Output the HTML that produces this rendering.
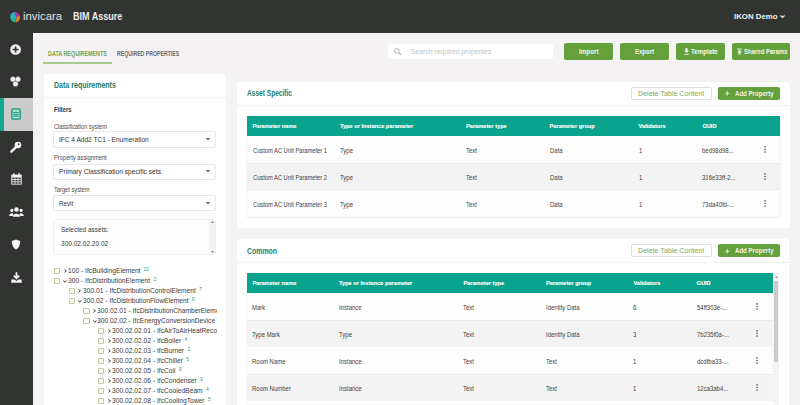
<!DOCTYPE html>
<html><head><meta charset="utf-8"><style>
*{box-sizing:border-box;margin:0;padding:0}
html,body{width:800px;height:405px;overflow:hidden}
body{position:relative;background:#f4f2f2;font-family:"Liberation Sans",sans-serif;color:#3a3a3a}
.a{position:absolute}
.t{position:absolute;white-space:nowrap;line-height:1}
svg{position:absolute;overflow:visible}
</style></head><body>
<div class="a" style="left:0px;top:0px;width:800px;height:33px;background:#323431"></div>
<svg style="left:9.5px;top:11.5px" width="10" height="10.6" viewBox="0 0 10 10.6">
<defs><linearGradient id="lg" x1="0" y1="0" x2="0.4" y2="1"><stop offset="0" stop-color="#3b9ce0"/><stop offset="0.45" stop-color="#1cb9c4"/><stop offset="1" stop-color="#22b36e"/></linearGradient>
<clipPath id="cp"><ellipse cx="5" cy="5.3" rx="4.8" ry="5.2" transform="rotate(-18 5 5.3)"/></clipPath></defs>
<g clip-path="url(#cp)">
<rect x="0" y="0" width="10" height="10.6" fill="url(#lg)"/>
<path d="M4.2 -0.5 L11 -0.5 L11 4.2 C9.5 3.6 7.8 4.2 6.6 5.4 C5.4 4 4.5 2.2 4.2 -0.5Z" fill="#b0359e"/>
<path d="M11 4.2 L11 11 L6.2 11 C5.9 9.2 5.9 7 6.6 5.4 C7.8 4.2 9.5 3.6 11 4.2Z" fill="#f07b25"/>
<path d="M6.6 5.4 C5.9 7 5.9 9.2 6.2 11" stroke="#333" stroke-width="0.45" fill="none" opacity="0.6"/>
</g></svg>
<span class="t" style="left:23.40px;top:11.67px;font-size:10.2px;color:#e2e2e2;transform:scaleX(1.1108);transform-origin:0 0;">invicara</span>
<span class="t" style="left:73.10px;top:11.88px;font-size:10.3px;color:#ececec;font-weight:bold;transform:scaleX(0.8760);transform-origin:0 0;">BIM Assure</span>
<span class="t" style="left:734.40px;top:13.07px;font-size:7.6px;color:#f0f0f0;font-weight:bold;transform:scaleX(1.0307);transform-origin:0 0;">IKON Demo</span>
<svg style="left:780px;top:15px" width="5" height="3" viewBox="0 0 5 3"><path d="M0.5 0.5 L2.5 2.5 L4.5 0.5" stroke="#eee" stroke-width="1.1" fill="none"/></svg>
<div class="a" style="left:0px;top:33px;width:33px;height:372px;background:#323431"></div>
<div class="a" style="left:0px;top:98px;width:33px;height:33px;background:#cbcbcb"></div>
<div class="a" style="left:0px;top:98px;width:4px;height:33px;background:#13a68e"></div>
<svg style="left:10px;top:43.8px" width="11" height="11" viewBox="0 0 11 11"><circle cx="5.6" cy="5.5" r="5.35" fill="#f4f4f4"/><path d="M5.6 2.5V8.5M2.6 5.5H8.6" stroke="#333" stroke-width="1.7"/></svg>
<svg style="left:10px;top:76px" width="11" height="11" viewBox="0 0 11 11"><circle cx="5.5" cy="7.9" r="2.7" fill="#f4f4f4" stroke="#3a3a3a" stroke-width="0.35"/><circle cx="3" cy="3.3" r="2.7" fill="#f4f4f4" stroke="#3a3a3a" stroke-width="0.35"/><circle cx="8" cy="3.3" r="2.7" fill="#f4f4f4" stroke="#3a3a3a" stroke-width="0.35"/></svg>
<svg style="left:11px;top:108px" width="10" height="12" viewBox="0 0 10 12"><rect x="0.8" y="0.8" width="8.4" height="10.4" rx="1.2" fill="#a3d6c6" stroke="#149c82" stroke-width="1.3"/><path d="M2.4 4.5H7.6M2.4 6.3H7.6M2.4 8.1H7.6" stroke="#149c82" stroke-width="0.9"/></svg>
<svg style="left:10px;top:140.6px" width="12" height="12" viewBox="0 0 12 12"><circle cx="8" cy="4" r="3.3" fill="#f4f4f4"/><circle cx="8.8" cy="3.2" r="0.9" fill="#333"/><path d="M6.2 5.8 L1.4 10.6" stroke="#f4f4f4" stroke-width="2.6" stroke-linecap="round"/></svg>
<svg style="left:10.8px;top:173.3px" width="11" height="12" viewBox="0 0 11 12"><rect x="0.3" y="1.6" width="10.4" height="10" fill="#f4f4f4"/><rect x="2.2" y="0.1" width="1.4" height="2.6" fill="#f4f4f4"/><rect x="7.4" y="0.1" width="1.4" height="2.6" fill="#f4f4f4"/><rect x="1.30" y="4.50" width="2.27" height="1.6" fill="#3a3a3a"/><rect x="4.37" y="4.50" width="2.27" height="1.6" fill="#3a3a3a"/><rect x="7.44" y="4.50" width="2.27" height="1.6" fill="#3a3a3a"/><rect x="1.30" y="6.85" width="2.27" height="1.6" fill="#3a3a3a"/><rect x="4.37" y="6.85" width="2.27" height="1.6" fill="#3a3a3a"/><rect x="7.44" y="6.85" width="2.27" height="1.6" fill="#3a3a3a"/><rect x="1.30" y="9.20" width="2.27" height="1.6" fill="#3a3a3a"/><rect x="4.37" y="9.20" width="2.27" height="1.6" fill="#3a3a3a"/><rect x="7.44" y="9.20" width="2.27" height="1.6" fill="#3a3a3a"/></svg>
<svg style="left:9px;top:207px" width="15" height="10" viewBox="0 0 15 10"><circle cx="7.5" cy="2.5" r="2.2" fill="#f4f4f4"/><circle cx="2.9" cy="3.4" r="1.6" fill="#f4f4f4"/><circle cx="12.1" cy="3.4" r="1.6" fill="#f4f4f4"/><path d="M3.8 9.8 C3.8 5.8 11.2 5.8 11.2 9.8Z" fill="#f4f4f4"/><path d="M0.2 9 C0.2 6 4 5.6 4.6 7 L3.6 9Z" fill="#f4f4f4"/><path d="M14.8 9 C14.8 6 11 5.6 10.4 7 L11.4 9Z" fill="#f4f4f4"/></svg>
<svg style="left:11px;top:238.5px" width="10" height="11" viewBox="0 0 10 11"><path d="M5 0.6 L9.2 2 C9.2 6 7.9 9 5 10.6 C2.1 9 0.8 6 0.8 2Z" fill="#f4f4f4"/></svg>
<svg style="left:10.5px;top:271.5px" width="11" height="11" viewBox="0 0 11 11"><path d="M5.5 0.3V6 M2.8 3.6 L5.5 6.3 L8.2 3.6" stroke="#f4f4f4" stroke-width="1.8" fill="none"/><path d="M0.3 7.5H3.6 L5.5 9 L7.4 7.5H10.7V10.7H0.3Z" fill="#f4f4f4"/></svg>
<span class="t" style="left:47.80px;top:51.01px;font-size:6.6px;color:#76a553;font-weight:bold;transform:scaleX(0.8175);transform-origin:0 0;">DATA REQUIREMENTS</span>
<span class="t" style="left:116.80px;top:50.98px;font-size:6.4px;color:#6a6a6a;font-weight:bold;transform:scaleX(0.8109);transform-origin:0 0;">REQUIRED PROPERTIES</span>
<div class="a" style="left:43px;top:62px;width:69px;height:2px;background:#a9c98d"></div>
<div class="a" style="left:44px;top:74px;width:182px;height:346px;background:#fff;border-radius:3px"></div>
<div class="a" style="left:44px;top:97px;width:182px;height:1px;background:#f0f0f0"></div>
<span class="t" style="left:53.75px;top:80.99px;font-size:8.4px;color:#257d6b;font-weight:bold;transform:scaleX(0.8416);transform-origin:0 0;">Data requirements</span>
<span class="t" style="left:53.75px;top:106.17px;font-size:7px;color:#333;font-weight:bold;transform:scaleX(0.8327);transform-origin:0 0;">Filters</span>
<span class="t" style="left:53.60px;top:123.58px;font-size:6.4px;color:#4c4c4c;transform:scaleX(0.8865);transform-origin:0 0;">Classification system</span>
<div class="a" style="left:53.3px;top:131.3px;width:162.7px;height:16.299999999999983px;border:1px solid #e6e6e6;border-radius:2px;background:#fff"></div>
<span class="t" style="left:58.70px;top:135.87px;font-size:7px;color:#333;transform:scaleX(0.9345);transform-origin:0 0;">IFC 4 Add2 TC1 - Enumeration</span>
<svg style="left:205.5px;top:138.2px" width="4" height="3" viewBox="0 0 4 3"><path d="M0 0H4L2 2.5Z" fill="#555"/></svg>
<span class="t" style="left:53.60px;top:155.48px;font-size:6.4px;color:#4c4c4c;transform:scaleX(0.8992);transform-origin:0 0;">Property assignment</span>
<div class="a" style="left:53.3px;top:163.5px;width:162.7px;height:16.0px;border:1px solid #e6e6e6;border-radius:2px;background:#fff"></div>
<span class="t" style="left:58.70px;top:168.07px;font-size:7px;color:#333;transform:scaleX(0.9499);transform-origin:0 0;">Primary Classification specific sets</span>
<svg style="left:205.5px;top:170.3px" width="4" height="3" viewBox="0 0 4 3"><path d="M0 0H4L2 2.5Z" fill="#555"/></svg>
<span class="t" style="left:53.60px;top:187.08px;font-size:6.4px;color:#4c4c4c;transform:scaleX(0.8924);transform-origin:0 0;">Target system</span>
<div class="a" style="left:53.3px;top:195px;width:162.7px;height:16px;border:1px solid #e6e6e6;border-radius:2px;background:#fff"></div>
<span class="t" style="left:58.70px;top:199.57px;font-size:7px;color:#333;transform:scaleX(0.8901);transform-origin:0 0;">Revit</span>
<svg style="left:205.5px;top:201.8px" width="4" height="3" viewBox="0 0 4 3"><path d="M0 0H4L2 2.5Z" fill="#555"/></svg>
<div class="a" style="left:53.3px;top:218.5px;width:162.5px;height:36.5px;border:1px solid #efefef;border-radius:3px;background:#fdfdfd"></div>
<div class="a" style="left:208.5px;top:219.5px;width:6.5px;height:34.5px;background:#f2f2f2"></div>
<svg style="left:210.5px;top:221px" width="3" height="2" viewBox="0 0 3 2"><path d="M0 2H3L1.5 0Z" fill="#8a8a8a"/></svg>
<svg style="left:210.5px;top:250.5px" width="3" height="2" viewBox="0 0 3 2"><path d="M0 0H3L1.5 2Z" fill="#8a8a8a"/></svg>
<span class="t" style="left:60.70px;top:226.17px;font-size:7px;color:#3a3a3a;transform:scaleX(0.9246);transform-origin:0 0;">Selected assets:</span>
<span class="t" style="left:60.70px;top:239.57px;font-size:7px;color:#3a3a3a;transform:scaleX(0.9326);transform-origin:0 0;">300.02.02.20.02</span>
<div class="a" style="left:44px;top:262px;width:172.6px;height:143px;overflow:hidden"><div class="a" style="left:-44px;top:-262px;width:800px;height:405px">
<div class="a" style="left:54.00px;top:267.80px;width:6.4px;height:6.2px;border:1px solid #b7ca98;border-radius:1px"></div>
<svg style="left:63.80px;top:269.10px" width="3" height="3.6" viewBox="0 0 3 3.6"><path d="M0.4 0.3 L2.4 1.8 L0.4 3.3" stroke="#333" stroke-width="0.9" fill="none"/></svg>
<span class="t" style="left:68.00px;top:266.71px;font-size:7.2px;color:#3a3a3a;transform:scaleX(0.93);transform-origin:0 0">100 - IfcBuildingElement<sup style="font-size:5.2px;color:#2a9c84;margin-left:3.6px;vertical-align:2.2px">21</sup></span>
<div class="a" style="left:54.00px;top:277.80px;width:6.4px;height:6.2px;border:1px solid #b7ca98;border-radius:1px"></div>
<svg style="left:63.30px;top:280.00px" width="3.6" height="3" viewBox="0 0 3.6 3"><path d="M0.3 0.4 L1.8 2.3 L3.3 0.4" stroke="#333" stroke-width="0.9" fill="none"/></svg>
<span class="t" style="left:68.00px;top:276.71px;font-size:7.2px;color:#3a3a3a;transform:scaleX(0.93);transform-origin:0 0">300 - IfcDistributionElement<sup style="font-size:5.2px;color:#2a9c84;margin-left:3.6px;vertical-align:2.2px">2</sup></span>
<div class="a" style="left:68.65px;top:287.80px;width:6.4px;height:6.2px;border:1px solid #b7ca98;border-radius:1px"></div>
<svg style="left:78.45px;top:289.10px" width="3" height="3.6" viewBox="0 0 3 3.6"><path d="M0.4 0.3 L2.4 1.8 L0.4 3.3" stroke="#333" stroke-width="0.9" fill="none"/></svg>
<span class="t" style="left:82.65px;top:286.71px;font-size:7.2px;color:#3a3a3a;transform:scaleX(0.93);transform-origin:0 0">300.01 - IfcDistributionControlElement<sup style="font-size:5.2px;color:#2a9c84;margin-left:3.6px;vertical-align:2.2px">7</sup></span>
<div class="a" style="left:68.65px;top:297.80px;width:6.4px;height:6.2px;border:1px solid #b7ca98;border-radius:1px"></div>
<svg style="left:77.95px;top:300.00px" width="3.6" height="3" viewBox="0 0 3.6 3"><path d="M0.3 0.4 L1.8 2.3 L3.3 0.4" stroke="#333" stroke-width="0.9" fill="none"/></svg>
<span class="t" style="left:82.65px;top:296.71px;font-size:7.2px;color:#3a3a3a;transform:scaleX(0.93);transform-origin:0 0">300.02 - IfcDistributionFlowElement<sup style="font-size:5.2px;color:#2a9c84;margin-left:3.6px;vertical-align:2.2px">9</sup></span>
<div class="a" style="left:83.30px;top:307.80px;width:6.4px;height:6.2px;border:1px solid #b7ca98;border-radius:1px"></div>
<svg style="left:93.10px;top:309.10px" width="3" height="3.6" viewBox="0 0 3 3.6"><path d="M0.4 0.3 L2.4 1.8 L0.4 3.3" stroke="#333" stroke-width="0.9" fill="none"/></svg>
<span class="t" style="left:97.30px;top:306.71px;font-size:7.2px;color:#3a3a3a;transform:scaleX(0.93);transform-origin:0 0">300.02.01 - IfcDistributionChamberElement</span>
<div class="a" style="left:83.30px;top:317.80px;width:6.4px;height:6.2px;border:1px solid #b7ca98;border-radius:1px"></div>
<svg style="left:92.60px;top:320.00px" width="3.6" height="3" viewBox="0 0 3.6 3"><path d="M0.3 0.4 L1.8 2.3 L3.3 0.4" stroke="#333" stroke-width="0.9" fill="none"/></svg>
<span class="t" style="left:97.30px;top:316.71px;font-size:7.2px;color:#3a3a3a;transform:scaleX(0.93);transform-origin:0 0">300.02.02 - IfcEnergyConversionDevice</span>
<div class="a" style="left:97.95px;top:327.80px;width:6.4px;height:6.2px;border:1px solid #b7ca98;border-radius:1px"></div>
<svg style="left:107.75px;top:329.10px" width="3" height="3.6" viewBox="0 0 3 3.6"><path d="M0.4 0.3 L2.4 1.8 L0.4 3.3" stroke="#333" stroke-width="0.9" fill="none"/></svg>
<span class="t" style="left:111.95px;top:326.71px;font-size:7.2px;color:#3a3a3a;transform:scaleX(0.93);transform-origin:0 0">300.02.02.01 - IfcAirToAirHeatRecovery</span>
<div class="a" style="left:97.95px;top:337.80px;width:6.4px;height:6.2px;border:1px solid #b7ca98;border-radius:1px"></div>
<svg style="left:107.75px;top:339.10px" width="3" height="3.6" viewBox="0 0 3 3.6"><path d="M0.4 0.3 L2.4 1.8 L0.4 3.3" stroke="#333" stroke-width="0.9" fill="none"/></svg>
<span class="t" style="left:111.95px;top:336.71px;font-size:7.2px;color:#3a3a3a;transform:scaleX(0.93);transform-origin:0 0">300.02.02.02 - IfcBoiler<sup style="font-size:5.2px;color:#2a9c84;margin-left:3.6px;vertical-align:2.2px">4</sup></span>
<div class="a" style="left:97.95px;top:347.80px;width:6.4px;height:6.2px;border:1px solid #b7ca98;border-radius:1px"></div>
<svg style="left:107.75px;top:349.10px" width="3" height="3.6" viewBox="0 0 3 3.6"><path d="M0.4 0.3 L2.4 1.8 L0.4 3.3" stroke="#333" stroke-width="0.9" fill="none"/></svg>
<span class="t" style="left:111.95px;top:346.71px;font-size:7.2px;color:#3a3a3a;transform:scaleX(0.93);transform-origin:0 0">300.02.02.03 - IfcBurner<sup style="font-size:5.2px;color:#2a9c84;margin-left:3.6px;vertical-align:2.2px">2</sup></span>
<div class="a" style="left:97.95px;top:357.80px;width:6.4px;height:6.2px;border:1px solid #b7ca98;border-radius:1px"></div>
<svg style="left:107.75px;top:359.10px" width="3" height="3.6" viewBox="0 0 3 3.6"><path d="M0.4 0.3 L2.4 1.8 L0.4 3.3" stroke="#333" stroke-width="0.9" fill="none"/></svg>
<span class="t" style="left:111.95px;top:356.71px;font-size:7.2px;color:#3a3a3a;transform:scaleX(0.93);transform-origin:0 0">300.02.02.04 - IfcChiller<sup style="font-size:5.2px;color:#2a9c84;margin-left:3.6px;vertical-align:2.2px">5</sup></span>
<div class="a" style="left:97.95px;top:367.80px;width:6.4px;height:6.2px;border:1px solid #b7ca98;border-radius:1px"></div>
<svg style="left:107.75px;top:369.10px" width="3" height="3.6" viewBox="0 0 3 3.6"><path d="M0.4 0.3 L2.4 1.8 L0.4 3.3" stroke="#333" stroke-width="0.9" fill="none"/></svg>
<span class="t" style="left:111.95px;top:366.71px;font-size:7.2px;color:#3a3a3a;transform:scaleX(0.93);transform-origin:0 0">300.02.02.05 - IfcCoil<sup style="font-size:5.2px;color:#2a9c84;margin-left:3.6px;vertical-align:2.2px">9</sup></span>
<div class="a" style="left:97.95px;top:377.80px;width:6.4px;height:6.2px;border:1px solid #b7ca98;border-radius:1px"></div>
<svg style="left:107.75px;top:379.10px" width="3" height="3.6" viewBox="0 0 3 3.6"><path d="M0.4 0.3 L2.4 1.8 L0.4 3.3" stroke="#333" stroke-width="0.9" fill="none"/></svg>
<span class="t" style="left:111.95px;top:376.71px;font-size:7.2px;color:#3a3a3a;transform:scaleX(0.93);transform-origin:0 0">300.02.02.06 - IfcCondenser<sup style="font-size:5.2px;color:#2a9c84;margin-left:3.6px;vertical-align:2.2px">9</sup></span>
<div class="a" style="left:97.95px;top:387.80px;width:6.4px;height:6.2px;border:1px solid #b7ca98;border-radius:1px"></div>
<svg style="left:107.75px;top:389.10px" width="3" height="3.6" viewBox="0 0 3 3.6"><path d="M0.4 0.3 L2.4 1.8 L0.4 3.3" stroke="#333" stroke-width="0.9" fill="none"/></svg>
<span class="t" style="left:111.95px;top:386.71px;font-size:7.2px;color:#3a3a3a;transform:scaleX(0.93);transform-origin:0 0">300.02.02.07 - IfcCooledBeam<sup style="font-size:5.2px;color:#2a9c84;margin-left:3.6px;vertical-align:2.2px">4</sup></span>
<div class="a" style="left:97.95px;top:397.80px;width:6.4px;height:6.2px;border:1px solid #b7ca98;border-radius:1px"></div>
<svg style="left:107.75px;top:399.10px" width="3" height="3.6" viewBox="0 0 3 3.6"><path d="M0.4 0.3 L2.4 1.8 L0.4 3.3" stroke="#333" stroke-width="0.9" fill="none"/></svg>
<span class="t" style="left:111.95px;top:396.71px;font-size:7.2px;color:#3a3a3a;transform:scaleX(0.93);transform-origin:0 0">300.02.02.08 - IfcCoolingTower<sup style="font-size:5.2px;color:#2a9c84;margin-left:3.6px;vertical-align:2.2px">5</sup></span>
</div></div>
<div class="a" style="left:387.7px;top:43.8px;width:165.59999999999997px;height:15.5px;background:#fff;border-radius:2px"></div>
<svg style="left:393.7px;top:48.2px" width="7.5" height="7" viewBox="0 0 7.5 7"><circle cx="2.9" cy="2.9" r="2.3" stroke="#a8a8a8" stroke-width="0.9" fill="none"/><path d="M4.6 4.6L7 6.8" stroke="#a8a8a8" stroke-width="1.1"/></svg>
<span class="t" style="left:410.80px;top:48.17px;font-size:7px;color:#c2c2c2;transform:scaleX(0.9687);transform-origin:0 0;">Search required properties</span>
<div class="a" style="left:563.8px;top:43.3px;width:49.10000000000002px;height:16.5px;background:#64a03c;border-radius:2px"></div>
<span class="t" style="left:578.70px;top:49.31px;font-size:6.6px;color:#f4f8f0;font-weight:bold;transform:scaleX(0.9505);transform-origin:0 0;">Import</span>
<div class="a" style="left:620px;top:43.3px;width:48.700000000000045px;height:16.5px;background:#64a03c;border-radius:2px"></div>
<span class="t" style="left:635.00px;top:49.31px;font-size:6.6px;color:#f4f8f0;font-weight:bold;transform:scaleX(0.9095);transform-origin:0 0;">Export</span>
<div class="a" style="left:675.8px;top:43.3px;width:49.10000000000002px;height:16.5px;background:#64a03c;border-radius:2px"></div>
<span class="t" style="left:691.00px;top:49.31px;font-size:6.6px;color:#f4f8f0;font-weight:bold;transform:scaleX(0.9379);transform-origin:0 0;">Template</span>
<svg style="left:684.2px;top:48px" width="5" height="7" viewBox="0 0 5 7"><rect x="1.55" y="0" width="1.9" height="3" fill="#f4f8f0"/><path d="M0.1 2.6H4.9L2.5 5.2Z" fill="#f4f8f0"/><rect x="0.1" y="5.9" width="4.8" height="0.85" fill="#f4f8f0"/></svg>
<div class="a" style="left:732px;top:43.3px;width:58.39999999999998px;height:16.5px;background:#64a03c;border-radius:2px"></div>
<span class="t" style="left:743.70px;top:49.31px;font-size:6.6px;color:#f4f8f0;font-weight:bold;transform:scaleX(0.9101);transform-origin:0 0;">Shared Params</span>
<svg style="left:736.6px;top:48.2px" width="5" height="7" viewBox="0 0 5 7"><rect x="0.1" y="0.6" width="4.8" height="0.85" fill="#f4f8f0"/><path d="M0.1 4.2H4.9L2.5 1.8Z" fill="#f4f8f0"/><rect x="1.4" y="3.9" width="2.2" height="2.7" rx="0.4" fill="#f4f8f0"/></svg>
<div class="a" style="left:237px;top:81.5px;width:553px;height:146.5px;background:#fff;border-radius:3px"></div>
<div class="a" style="left:237px;top:104.5px;width:553px;height:1.0px;background:#f0f0f0"></div>
<span class="t" style="left:247.30px;top:88.80px;font-size:8.5px;color:#257d6b;font-weight:bold;transform:scaleX(0.7742);transform-origin:0 0;">Asset Specific</span>
<div class="a" style="left:631px;top:87px;width:80.60000000000002px;height:13px;border:1px solid #dedede;border-radius:2px;background:#fff"></div>
<span class="t" style="left:638.40px;top:90.07px;font-size:7px;color:#7aa95c;transform:scaleX(1.0146);transform-origin:0 0;">Delete Table Content</span>
<div class="a" style="left:718.4px;top:87px;width:61.80000000000007px;height:13px;background:#64a03c;border-radius:2px"></div>
<svg style="left:725.4px;top:91.2px" width="4.6" height="4.6" viewBox="0 0 4.6 4.6"><path d="M2.3 0V4.6M0 2.3H4.6" stroke="#eef5e8" stroke-width="0.9"/></svg>
<span class="t" style="left:735.40px;top:90.64px;font-size:6.8px;color:#eef5e8;font-weight:bold;transform:scaleX(0.8964);transform-origin:0 0;">Add Property</span>
<div class="a" style="left:247px;top:116px;width:533px;height:101px;box-shadow:0 0.5px 1.5px rgba(0,0,0,0.18);background:#fdfdfd"></div>
<div class="a" style="left:247px;top:116px;width:533px;height:20px;background:#0aa38e"></div>
<span class="t" style="left:252.50px;top:123.82px;font-size:5.65px;color:#ffffff;font-weight:bold;-webkit-text-stroke:0.12px #fff;">Parameter name</span>
<span class="t" style="left:339.90px;top:123.82px;font-size:5.65px;color:#ffffff;font-weight:bold;-webkit-text-stroke:0.12px #fff;">Type or Instance parameter</span>
<span class="t" style="left:466.00px;top:123.82px;font-size:5.65px;color:#ffffff;font-weight:bold;-webkit-text-stroke:0.12px #fff;">Parameter type</span>
<span class="t" style="left:549.60px;top:123.82px;font-size:5.65px;color:#ffffff;font-weight:bold;-webkit-text-stroke:0.12px #fff;">Parameter group</span>
<span class="t" style="left:638.60px;top:123.82px;font-size:5.65px;color:#ffffff;font-weight:bold;-webkit-text-stroke:0.12px #fff;">Validators</span>
<span class="t" style="left:702.40px;top:123.82px;font-size:5.65px;color:#ffffff;font-weight:bold;-webkit-text-stroke:0.12px #fff;">GUID</span>
<div class="a" style="left:247px;top:136px;width:533px;height:27px;background:#fdfdfd"></div>
<span class="t" style="left:252.50px;top:147.60px;font-size:6.5px;color:#3f3f3f;transform:scaleX(0.8829);transform-origin:0 0;">Custom AC Unit Parameter 1</span>
<span class="t" style="left:339.90px;top:147.60px;font-size:6.5px;color:#3f3f3f;transform:scaleX(0.9200);transform-origin:0 0;">Type</span>
<span class="t" style="left:466.00px;top:147.60px;font-size:6.5px;color:#3f3f3f;transform:scaleX(0.9200);transform-origin:0 0;">Text</span>
<span class="t" style="left:549.60px;top:147.60px;font-size:6.5px;color:#3f3f3f;transform:scaleX(0.9200);transform-origin:0 0;">Data</span>
<span class="t" style="left:638.60px;top:147.60px;font-size:6.5px;color:#3f3f3f;transform:scaleX(0.9200);transform-origin:0 0;">1</span>
<span class="t" style="left:702.40px;top:147.60px;font-size:6.5px;color:#3f3f3f;transform:scaleX(0.9200);transform-origin:0 0;">bed98d98...</span>
<svg style="left:763.9px;top:145.9px" width="2" height="7" viewBox="0 0 2 7"><circle cx="1" cy="0.9" r="0.8" fill="#555"/><circle cx="1" cy="3.5" r="0.8" fill="#555"/><circle cx="1" cy="6.1" r="0.8" fill="#555"/></svg>
<div class="a" style="left:247px;top:163px;width:533px;height:27px;background:#f3f3f3"></div>
<div class="a" style="left:247px;top:163px;width:533px;height:0.5999999999999943px;background:#e9e9e9"></div>
<div class="a" style="left:247px;top:189.4px;width:533px;height:0.5999999999999943px;background:#e9e9e9"></div>
<span class="t" style="left:252.50px;top:174.60px;font-size:6.5px;color:#3f3f3f;transform:scaleX(0.8829);transform-origin:0 0;">Custom AC Unit Parameter 2</span>
<span class="t" style="left:339.90px;top:174.60px;font-size:6.5px;color:#3f3f3f;transform:scaleX(0.9200);transform-origin:0 0;">Type</span>
<span class="t" style="left:466.00px;top:174.60px;font-size:6.5px;color:#3f3f3f;transform:scaleX(0.9200);transform-origin:0 0;">Text</span>
<span class="t" style="left:549.60px;top:174.60px;font-size:6.5px;color:#3f3f3f;transform:scaleX(0.9200);transform-origin:0 0;">Data</span>
<span class="t" style="left:638.60px;top:174.60px;font-size:6.5px;color:#3f3f3f;transform:scaleX(0.9200);transform-origin:0 0;">1</span>
<span class="t" style="left:702.40px;top:174.60px;font-size:6.5px;color:#3f3f3f;transform:scaleX(0.9200);transform-origin:0 0;">316e33ff-2...</span>
<svg style="left:763.9px;top:172.9px" width="2" height="7" viewBox="0 0 2 7"><circle cx="1" cy="0.9" r="0.8" fill="#555"/><circle cx="1" cy="3.5" r="0.8" fill="#555"/><circle cx="1" cy="6.1" r="0.8" fill="#555"/></svg>
<div class="a" style="left:247px;top:190px;width:533px;height:27px;background:#fdfdfd"></div>
<span class="t" style="left:252.50px;top:201.60px;font-size:6.5px;color:#3f3f3f;transform:scaleX(0.8829);transform-origin:0 0;">Custom AC Unit Parameter 3</span>
<span class="t" style="left:339.90px;top:201.60px;font-size:6.5px;color:#3f3f3f;transform:scaleX(0.9200);transform-origin:0 0;">Type</span>
<span class="t" style="left:466.00px;top:201.60px;font-size:6.5px;color:#3f3f3f;transform:scaleX(0.9200);transform-origin:0 0;">Text</span>
<span class="t" style="left:549.60px;top:201.60px;font-size:6.5px;color:#3f3f3f;transform:scaleX(0.9200);transform-origin:0 0;">Data</span>
<span class="t" style="left:638.60px;top:201.60px;font-size:6.5px;color:#3f3f3f;transform:scaleX(0.9200);transform-origin:0 0;">1</span>
<span class="t" style="left:702.40px;top:201.60px;font-size:6.5px;color:#3f3f3f;transform:scaleX(0.9200);transform-origin:0 0;">73da40fd-...</span>
<svg style="left:763.9px;top:199.9px" width="2" height="7" viewBox="0 0 2 7"><circle cx="1" cy="0.9" r="0.8" fill="#555"/><circle cx="1" cy="3.5" r="0.8" fill="#555"/><circle cx="1" cy="6.1" r="0.8" fill="#555"/></svg>
<div class="a" style="left:237px;top:239px;width:552px;height:181px;background:#fff;border-radius:3px"></div>
<div class="a" style="left:237px;top:261.9px;width:552px;height:1.0px;background:#f0f0f0"></div>
<span class="t" style="left:247.30px;top:246.60px;font-size:8.5px;color:#257d6b;font-weight:bold;transform:scaleX(0.8142);transform-origin:0 0;">Common</span>
<div class="a" style="left:631px;top:244.3px;width:80.60000000000002px;height:13.0px;border:1px solid #dedede;border-radius:2px;background:#fff"></div>
<span class="t" style="left:638.40px;top:247.37px;font-size:7px;color:#7aa95c;transform:scaleX(1.0146);transform-origin:0 0;">Delete Table Content</span>
<div class="a" style="left:718.4px;top:244.3px;width:61.80000000000007px;height:13.0px;background:#64a03c;border-radius:2px"></div>
<svg style="left:725.4px;top:248.5px" width="4.6" height="4.6" viewBox="0 0 4.6 4.6"><path d="M2.3 0V4.6M0 2.3H4.6" stroke="#eef5e8" stroke-width="0.9"/></svg>
<span class="t" style="left:735.40px;top:247.94px;font-size:6.8px;color:#eef5e8;font-weight:bold;transform:scaleX(0.8964);transform-origin:0 0;">Add Property</span>
<div class="a" style="left:247px;top:273.3px;width:526px;height:155.0px;box-shadow:0 0.5px 1.5px rgba(0,0,0,0.18);background:#fdfdfd"></div>
<div class="a" style="left:247px;top:273.3px;width:526px;height:20.0px;background:#0aa38e"></div>
<span class="t" style="left:252.40px;top:281.12px;font-size:5.65px;color:#ffffff;font-weight:bold;-webkit-text-stroke:0.12px #fff;">Parameter name</span>
<span class="t" style="left:339.00px;top:281.12px;font-size:5.65px;color:#ffffff;font-weight:bold;-webkit-text-stroke:0.12px #fff;">Type or Instance parameter</span>
<span class="t" style="left:463.40px;top:281.12px;font-size:5.65px;color:#ffffff;font-weight:bold;-webkit-text-stroke:0.12px #fff;">Parameter type</span>
<span class="t" style="left:546.00px;top:281.12px;font-size:5.65px;color:#ffffff;font-weight:bold;-webkit-text-stroke:0.12px #fff;">Parameter group</span>
<span class="t" style="left:633.40px;top:281.12px;font-size:5.65px;color:#ffffff;font-weight:bold;-webkit-text-stroke:0.12px #fff;">Validators</span>
<span class="t" style="left:696.60px;top:281.12px;font-size:5.65px;color:#ffffff;font-weight:bold;-webkit-text-stroke:0.12px #fff;">GUID</span>
<div class="a" style="left:247px;top:293.3px;width:526px;height:27.0px;background:#fdfdfd"></div>
<span class="t" style="left:252.40px;top:304.90px;font-size:6.5px;color:#3f3f3f;transform:scaleX(0.9200);transform-origin:0 0;">Mark</span>
<span class="t" style="left:339.00px;top:304.90px;font-size:6.5px;color:#3f3f3f;transform:scaleX(0.9200);transform-origin:0 0;">Instance</span>
<span class="t" style="left:463.40px;top:304.90px;font-size:6.5px;color:#3f3f3f;transform:scaleX(0.9200);transform-origin:0 0;">Text</span>
<span class="t" style="left:546.00px;top:304.90px;font-size:6.5px;color:#3f3f3f;transform:scaleX(0.9200);transform-origin:0 0;">Identity Data</span>
<span class="t" style="left:633.40px;top:304.90px;font-size:6.5px;color:#3f3f3f;transform:scaleX(0.9200);transform-origin:0 0;">6</span>
<span class="t" style="left:696.60px;top:304.90px;font-size:6.5px;color:#3f3f3f;transform:scaleX(0.9200);transform-origin:0 0;">54ff303e-...</span>
<svg style="left:756.3px;top:303.2px" width="2" height="7" viewBox="0 0 2 7"><circle cx="1" cy="0.9" r="0.8" fill="#555"/><circle cx="1" cy="3.5" r="0.8" fill="#555"/><circle cx="1" cy="6.1" r="0.8" fill="#555"/></svg>
<div class="a" style="left:247px;top:320.3px;width:526px;height:27.0px;background:#f3f3f3"></div>
<div class="a" style="left:247px;top:320.3px;width:526px;height:0.6000000000000227px;background:#e9e9e9"></div>
<div class="a" style="left:247px;top:346.7px;width:526px;height:0.6000000000000227px;background:#e9e9e9"></div>
<span class="t" style="left:252.40px;top:331.90px;font-size:6.5px;color:#3f3f3f;transform:scaleX(0.9200);transform-origin:0 0;">Type Mark</span>
<span class="t" style="left:339.00px;top:331.90px;font-size:6.5px;color:#3f3f3f;transform:scaleX(0.9200);transform-origin:0 0;">Type</span>
<span class="t" style="left:463.40px;top:331.90px;font-size:6.5px;color:#3f3f3f;transform:scaleX(0.9200);transform-origin:0 0;">Text</span>
<span class="t" style="left:546.00px;top:331.90px;font-size:6.5px;color:#3f3f3f;transform:scaleX(0.9200);transform-origin:0 0;">Identity Data</span>
<span class="t" style="left:633.40px;top:331.90px;font-size:6.5px;color:#3f3f3f;transform:scaleX(0.9200);transform-origin:0 0;">3</span>
<span class="t" style="left:696.60px;top:331.90px;font-size:6.5px;color:#3f3f3f;transform:scaleX(0.9200);transform-origin:0 0;">7b235f0a-...</span>
<svg style="left:756.3px;top:330.2px" width="2" height="7" viewBox="0 0 2 7"><circle cx="1" cy="0.9" r="0.8" fill="#555"/><circle cx="1" cy="3.5" r="0.8" fill="#555"/><circle cx="1" cy="6.1" r="0.8" fill="#555"/></svg>
<div class="a" style="left:247px;top:347.3px;width:526px;height:27.0px;background:#fdfdfd"></div>
<span class="t" style="left:252.40px;top:358.90px;font-size:6.5px;color:#3f3f3f;transform:scaleX(0.9200);transform-origin:0 0;">Room Name</span>
<span class="t" style="left:339.00px;top:358.90px;font-size:6.5px;color:#3f3f3f;transform:scaleX(0.9200);transform-origin:0 0;">Instance</span>
<span class="t" style="left:463.40px;top:358.90px;font-size:6.5px;color:#3f3f3f;transform:scaleX(0.9200);transform-origin:0 0;">Text</span>
<span class="t" style="left:546.00px;top:358.90px;font-size:6.5px;color:#3f3f3f;transform:scaleX(0.9200);transform-origin:0 0;">Text</span>
<span class="t" style="left:633.40px;top:358.90px;font-size:6.5px;color:#3f3f3f;transform:scaleX(0.9200);transform-origin:0 0;">1</span>
<span class="t" style="left:696.60px;top:358.90px;font-size:6.5px;color:#3f3f3f;transform:scaleX(0.9200);transform-origin:0 0;">dcdfba33-...</span>
<svg style="left:756.3px;top:357.2px" width="2" height="7" viewBox="0 0 2 7"><circle cx="1" cy="0.9" r="0.8" fill="#555"/><circle cx="1" cy="3.5" r="0.8" fill="#555"/><circle cx="1" cy="6.1" r="0.8" fill="#555"/></svg>
<div class="a" style="left:247px;top:374.3px;width:526px;height:27.0px;background:#f3f3f3"></div>
<div class="a" style="left:247px;top:374.3px;width:526px;height:0.6000000000000227px;background:#e9e9e9"></div>
<div class="a" style="left:247px;top:400.7px;width:526px;height:0.6000000000000227px;background:#e9e9e9"></div>
<span class="t" style="left:252.40px;top:385.90px;font-size:6.5px;color:#3f3f3f;transform:scaleX(0.9200);transform-origin:0 0;">Room Number</span>
<span class="t" style="left:339.00px;top:385.90px;font-size:6.5px;color:#3f3f3f;transform:scaleX(0.9200);transform-origin:0 0;">Instance</span>
<span class="t" style="left:463.40px;top:385.90px;font-size:6.5px;color:#3f3f3f;transform:scaleX(0.9200);transform-origin:0 0;">Text</span>
<span class="t" style="left:546.00px;top:385.90px;font-size:6.5px;color:#3f3f3f;transform:scaleX(0.9200);transform-origin:0 0;">Text</span>
<span class="t" style="left:633.40px;top:385.90px;font-size:6.5px;color:#3f3f3f;transform:scaleX(0.9200);transform-origin:0 0;">1</span>
<span class="t" style="left:696.60px;top:385.90px;font-size:6.5px;color:#3f3f3f;transform:scaleX(0.9200);transform-origin:0 0;">12ca3ab4...</span>
<svg style="left:756.3px;top:384.2px" width="2" height="7" viewBox="0 0 2 7"><circle cx="1" cy="0.9" r="0.8" fill="#555"/><circle cx="1" cy="3.5" r="0.8" fill="#555"/><circle cx="1" cy="6.1" r="0.8" fill="#555"/></svg>
<div class="a" style="left:247px;top:401.3px;width:526px;height:27.0px;background:#fdfdfd"></div>
<span class="t" style="left:252.40px;top:412.90px;font-size:6.5px;color:#3f3f3f;transform:scaleX(0.9200);transform-origin:0 0;">Room Area</span>
<span class="t" style="left:339.00px;top:412.90px;font-size:6.5px;color:#3f3f3f;transform:scaleX(0.9200);transform-origin:0 0;">Instance</span>
<span class="t" style="left:463.40px;top:412.90px;font-size:6.5px;color:#3f3f3f;transform:scaleX(0.9200);transform-origin:0 0;">Area</span>
<span class="t" style="left:546.00px;top:412.90px;font-size:6.5px;color:#3f3f3f;transform:scaleX(0.9200);transform-origin:0 0;">Dimensions</span>
<span class="t" style="left:633.40px;top:412.90px;font-size:6.5px;color:#3f3f3f;transform:scaleX(0.9200);transform-origin:0 0;">1</span>
<span class="t" style="left:696.60px;top:412.90px;font-size:6.5px;color:#3f3f3f;transform:scaleX(0.9200);transform-origin:0 0;">a1b2c3d4...</span>
<svg style="left:756.3px;top:411.2px" width="2" height="7" viewBox="0 0 2 7"><circle cx="1" cy="0.9" r="0.8" fill="#555"/><circle cx="1" cy="3.5" r="0.8" fill="#555"/><circle cx="1" cy="6.1" r="0.8" fill="#555"/></svg>
<div class="a" style="left:773px;top:273.3px;width:6px;height:131.7px;background:#f4f4f4"></div>
<div class="a" style="left:773.8px;top:281px;width:4.400000000000091px;height:81px;background:#cacaca"></div>
<svg style="left:774.5px;top:276px" width="3" height="2" viewBox="0 0 3 2"><path d="M0 2H3L1.5 0Z" fill="#999"/></svg>
</body></html>
